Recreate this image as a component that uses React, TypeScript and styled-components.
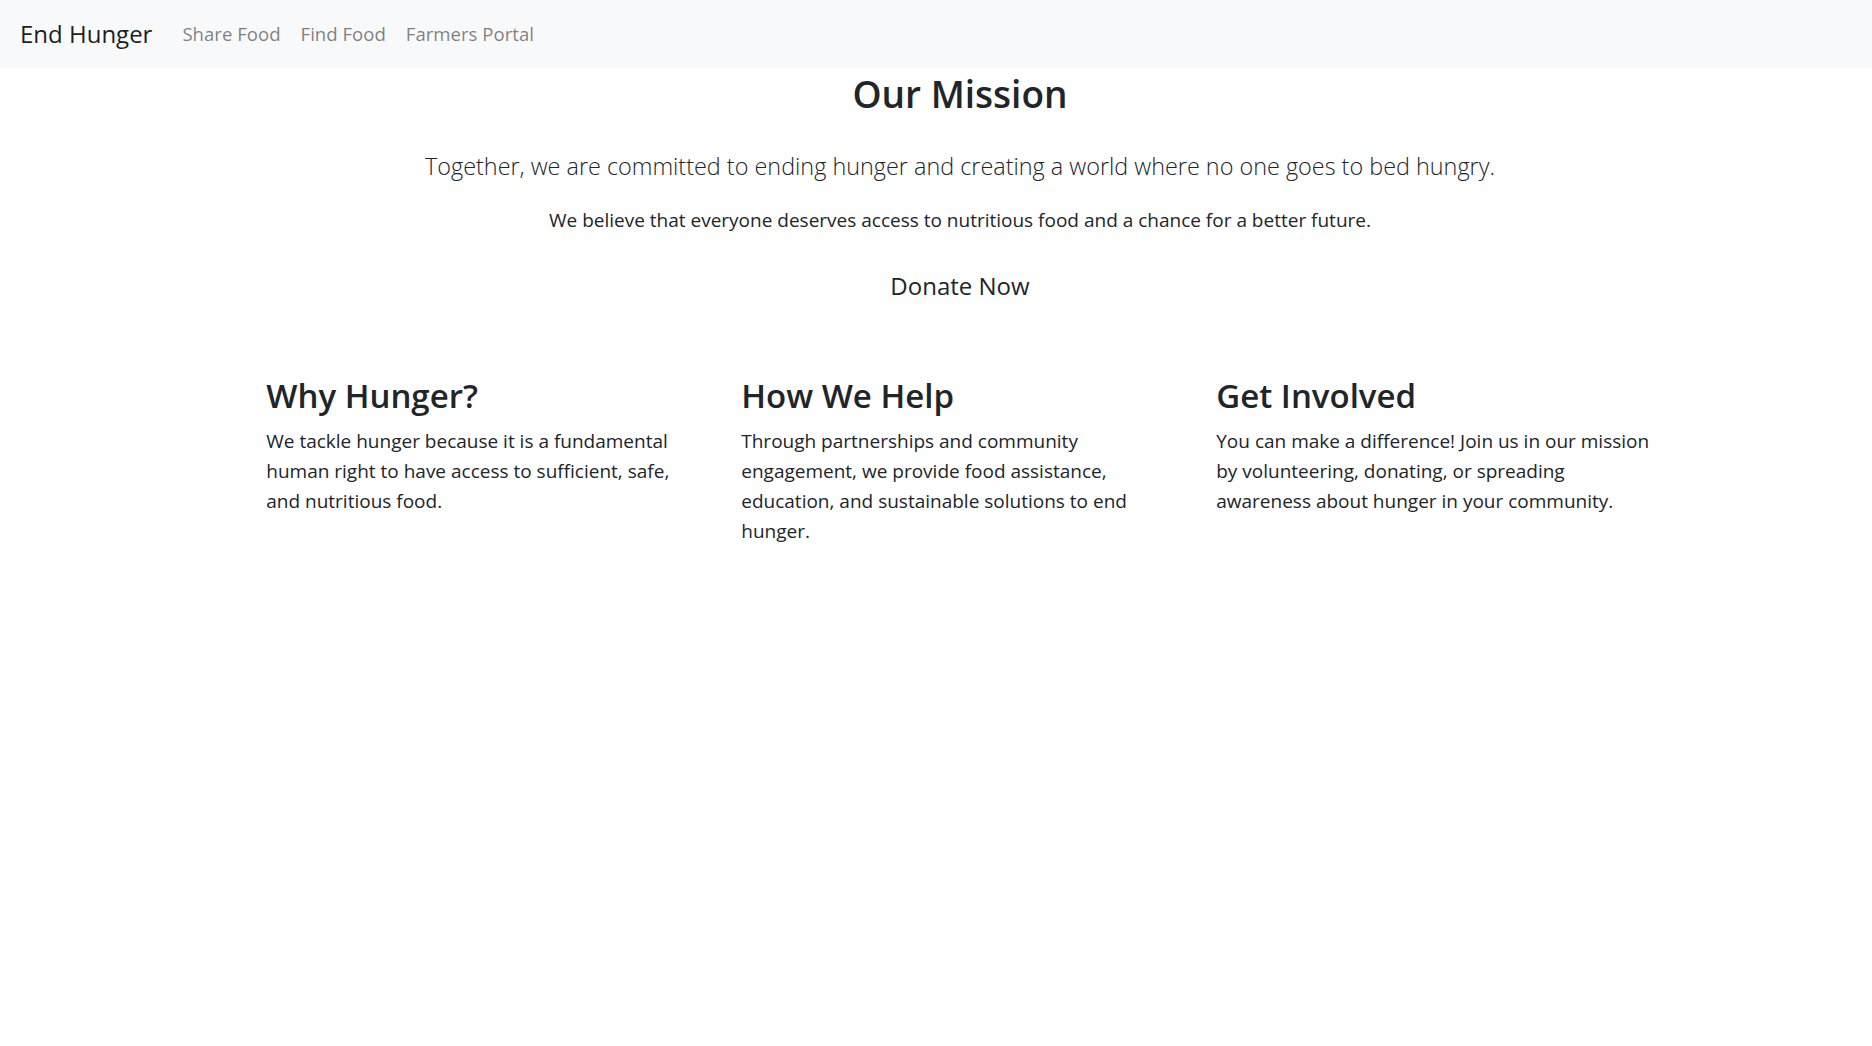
import React from 'react';
import { styled, createGlobalStyle } from 'styled-components';

const GlobalStyle = createGlobalStyle`
  *, *::before, *::after {
    box-sizing: border-box;
  }
  body {
    margin: 0;
    background: #ffffff;
    color: #212529;
    font-family: 'Open Sans', 'Noto Sans', sans-serif;
    font-size: 20px;
    line-height: 1.5;
    overflow-x: hidden;
  }
`;

const NAV_LINKS = ['Share Food', 'Find Food', 'Farmers Portal'];

const COLUMNS = [
  {
    title: 'Why Hunger?',
    text: 'We tackle hunger because it is a fundamental human right to have access to sufficient, safe, and nutritious food.',
  },
  {
    title: 'How We Help',
    text: 'Through partnerships and community engagement, we provide food assistance, education, and sustainable solutions to end hunger.',
  },
  {
    title: 'Get Involved',
    text: 'You can make a difference! Join us in our mission by volunteering, donating, or spreading awareness about hunger in your community.',
  },
];

const App = () => {
  return (
    <>
      <GlobalStyle />
      <Navbar>
        <Brand href="#">End Hunger</Brand>
        <NavList>
          {NAV_LINKS.map((link) => (
            <NavLink key={link} href="#">
              {link}
            </NavLink>
          ))}
        </NavList>
      </Navbar>
      <Page>
        <Hero>
          <Title>Our Mission</Title>
          <Lead>Together, we are committed to ending hunger and creating a world where no one goes to bed hungry.</Lead>
          <Text>We believe that everyone deserves access to nutritious food and a chance for a better future.</Text>
          <DonateBtn type="button">Donate Now</DonateBtn>
        </Hero>
        <Row>
          {COLUMNS.map((col) => (
            <Column key={col.title}>
              <ColumnTitle>{col.title}</ColumnTitle>
              <ColumnText>{col.text}</ColumnText>
            </Column>
          ))}
        </Row>
      </Page>
    </>
  );
};

export default App;

const Navbar = styled.nav`
  display: flex;
  align-items: center;
  height: 68px;
  padding: 0 20px;
  background-color: #f8f9fa;
`;
const Brand = styled.a`
  margin-right: 20px;
  color: rgba(0, 0, 0, 0.9);
  font-size: 24px;
  line-height: 1.5;
  text-decoration: none;
`;
const NavList = styled.div`
  display: flex;
`;
const NavLink = styled.a`
  padding: 0 10px;
  color: rgba(0, 0, 0, 0.5);
  font-size: 18.6px;
  text-decoration: none;
`;
const Page = styled.main`
  padding-left: 48px;
`;
const Hero = styled.section`
  display: flex;
  flex-direction: column;
  align-items: center;
  text-align: center;
`;
const Title = styled.h2`
  margin: 4px 0 33px;
  font-size: 37px;
  font-weight: 600;
  line-height: 1.2;
`;
const Lead = styled.p`
  margin: 0 0 21px;
  font-size: 23.4px;
  font-weight: 300;
  line-height: 1.5;
`;
const Text = styled.p`
  margin: 0 0 22.5px;
  font-size: 19px;
`;
const DonateBtn = styled.button`
  padding: 10px 20px;
  border: 1px solid transparent;
  background: transparent;
  color: #212529;
  font-family: inherit;
  font-size: 24px;
  line-height: 1.5;
  cursor: pointer;
`;
const Row = styled.div`
  display: grid;
  grid-template-columns: repeat(3, 1fr);
  width: 1425px;
  margin: 61px auto 0;
`;
const Column = styled.div`
  padding: 0 18.75px;
`;
const ColumnTitle = styled.h3`
  margin: 0 0 11px;
  font-size: 33px;
  font-weight: 600;
  line-height: 1.2;
`;
const ColumnText = styled.p`
  margin: 0;
  font-size: 19px;
  line-height: 30px;
`;
